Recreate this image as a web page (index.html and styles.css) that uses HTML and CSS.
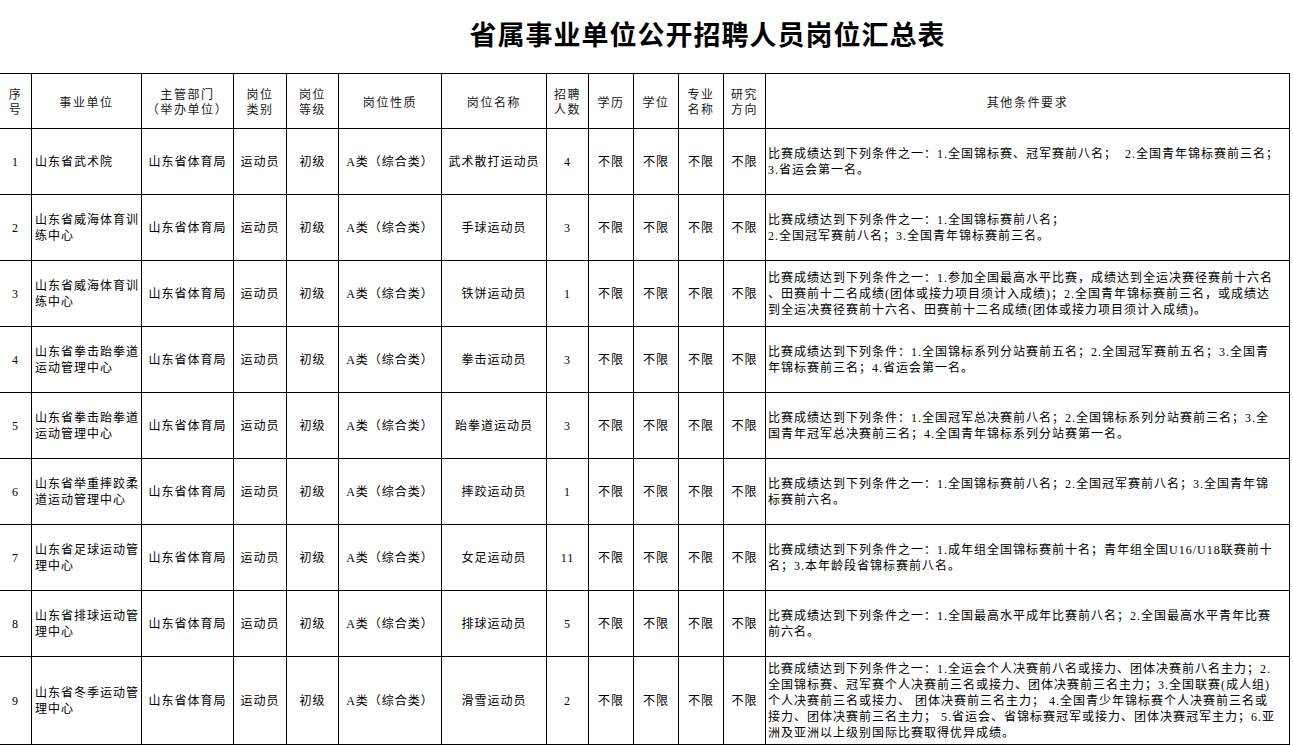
FILE: index.html
```html
<!DOCTYPE html>
<html lang="zh-CN">
<head>
<meta charset="utf-8">
<title>省属事业单位公开招聘人员岗位汇总表</title>
<link rel="stylesheet" href="styles.css">
</head>
<body>
<h1 class="title">省属事业单位公开招聘人员岗位汇总表</h1>
<table class="sheet">
  <colgroup>
    <col class="c-no"><col class="c-unit"><col class="c-dept"><col class="c-type"><col class="c-level">
    <col class="c-nature"><col class="c-name"><col class="c-count"><col class="c-edu"><col class="c-deg">
    <col class="c-major"><col class="c-res"><col class="c-other">
  </colgroup>
  <thead>
    <tr>
      <th>序<br>号</th>
      <th>事业单位</th>
      <th>主管部门<br>（举办单位）</th>
      <th>岗位<br>类别</th>
      <th>岗位<br>等级</th>
      <th>岗位性质</th>
      <th>岗位名称</th>
      <th>招聘<br>人数</th>
      <th>学历</th>
      <th>学位</th>
      <th>专业<br>名称</th>
      <th>研究<br>方向</th>
      <th>其他条件要求</th>
    </tr>
  </thead>
  <tbody>
    <tr>
      <td>1</td><td class="unit">山东省武术院</td><td>山东省体育局</td><td>运动员</td><td>初级</td><td>A类（综合类）</td><td>武术散打运动员</td><td>4</td><td>不限</td><td>不限</td><td>不限</td><td>不限</td>
      <td class="other">比赛成绩达到下列条件之一：1.全国锦标赛、冠军赛前八名；&nbsp; 2.全国青年锦标赛前三名；<br>3.省运会第一名。</td>
    </tr>
    <tr>
      <td>2</td><td class="unit">山东省威海体育训练中心</td><td>山东省体育局</td><td>运动员</td><td>初级</td><td>A类（综合类）</td><td>手球运动员</td><td>3</td><td>不限</td><td>不限</td><td>不限</td><td>不限</td>
      <td class="other">比赛成绩达到下列条件之一：1.全国锦标赛前八名；<br>2.全国冠军赛前八名；3.全国青年锦标赛前三名。</td>
    </tr>
    <tr>
      <td>3</td><td class="unit">山东省威海体育训练中心</td><td>山东省体育局</td><td>运动员</td><td>初级</td><td>A类（综合类）</td><td>铁饼运动员</td><td>1</td><td>不限</td><td>不限</td><td>不限</td><td>不限</td>
      <td class="other">比赛成绩达到下列条件之一：1.参加全国最高水平比赛，成绩达到全运决赛径赛前十六名<br>、田赛前十二名成绩(团体或接力项目须计入成绩)；2.全国青年锦标赛前三名，或成绩达<br>到全运决赛径赛前十六名、田赛前十二名成绩(团体或接力项目须计入成绩)。</td>
    </tr>
    <tr>
      <td>4</td><td class="unit">山东省拳击跆拳道运动管理中心</td><td>山东省体育局</td><td>运动员</td><td>初级</td><td>A类（综合类）</td><td>拳击运动员</td><td>3</td><td>不限</td><td>不限</td><td>不限</td><td>不限</td>
      <td class="other">比赛成绩达到下列条件：1.全国锦标系列分站赛前五名；2.全国冠军赛前五名；3.全国青<br>年锦标赛前三名；4.省运会第一名。</td>
    </tr>
    <tr>
      <td>5</td><td class="unit">山东省拳击跆拳道运动管理中心</td><td>山东省体育局</td><td>运动员</td><td>初级</td><td>A类（综合类）</td><td>跆拳道运动员</td><td>3</td><td>不限</td><td>不限</td><td>不限</td><td>不限</td>
      <td class="other">比赛成绩达到下列条件：1.全国冠军总决赛前八名；2.全国锦标系列分站赛前三名；3.全<br>国青年冠军总决赛前三名；4.全国青年锦标系列分站赛第一名。</td>
    </tr>
    <tr>
      <td>6</td><td class="unit">山东省举重摔跤柔道运动管理中心</td><td>山东省体育局</td><td>运动员</td><td>初级</td><td>A类（综合类）</td><td>摔跤运动员</td><td>1</td><td>不限</td><td>不限</td><td>不限</td><td>不限</td>
      <td class="other">比赛成绩达到下列条件之一：1.全国锦标赛前八名；2.全国冠军赛前八名；3.全国青年锦<br>标赛前六名。</td>
    </tr>
    <tr>
      <td>7</td><td class="unit">山东省足球运动管理中心</td><td>山东省体育局</td><td>运动员</td><td>初级</td><td>A类（综合类）</td><td>女足运动员</td><td>11</td><td>不限</td><td>不限</td><td>不限</td><td>不限</td>
      <td class="other">比赛成绩达到下列条件之一：1.成年组全国锦标赛前十名；青年组全国U16/U18联赛前十<br>名；3.本年龄段省锦标赛前八名。</td>
    </tr>
    <tr>
      <td>8</td><td class="unit">山东省排球运动管理中心</td><td>山东省体育局</td><td>运动员</td><td>初级</td><td>A类（综合类）</td><td>排球运动员</td><td>5</td><td>不限</td><td>不限</td><td>不限</td><td>不限</td>
      <td class="other">比赛成绩达到下列条件之一：1.全国最高水平成年比赛前八名；2.全国最高水平青年比赛<br>前六名。</td>
    </tr>
    <tr class="tall">
      <td>9</td><td class="unit">山东省冬季运动管理中心</td><td>山东省体育局</td><td>运动员</td><td>初级</td><td>A类（综合类）</td><td>滑雪运动员</td><td>2</td><td>不限</td><td>不限</td><td>不限</td><td>不限</td>
      <td class="other">比赛成绩达到下列条件之一：1.全运会个人决赛前八名或接力、团体决赛前八名主力；2.<br>全国锦标赛、冠军赛个人决赛前三名或接力、团体决赛前三名主力；3.全国联赛(成人组)<br>个人决赛前三名或接力、 团体决赛前三名主力； 4.全国青少年锦标赛个人决赛前三名或<br>接力、团体决赛前三名主力； 5.省运会、省锦标赛冠军或接力、团体决赛冠军主力；6.亚<br>洲及亚洲以上级别国际比赛取得优异成绩。</td>
    </tr>
  </tbody>
</table>
</body>
</html>
```

FILE: styles.css
```css
* { box-sizing: border-box; }

html, body {
  margin: 0;
  padding: 0;
  background: #ffffff;
  color: #000000;
}

body {
  width: 1293px;
  height: 745px;
  overflow: hidden;
  font-family: "Liberation Serif", "Noto Sans CJK SC", serif;
}

.title {
  margin: 0;
  height: 73px;
  padding: 0 0 6px 122px;
  display: flex;
  align-items: center;
  justify-content: center;
  font-family: "Noto Sans CJK SC", sans-serif;
  font-weight: 700;
  font-size: 27px;
  letter-spacing: 1px;
  line-height: 1;
}

.sheet {
  table-layout: fixed;
  border-collapse: separate;
  border-spacing: 0;
  width: 1290px;
  border-top: 1px solid #000;
}

.c-no { width: 32px; }
.c-unit { width: 110px; }
.c-dept { width: 92px; }
.c-type { width: 53px; }
.c-level { width: 52px; }
.c-nature { width: 103px; }
.c-name { width: 105px; }
.c-count { width: 42px; }
.c-edu { width: 45px; }
.c-deg { width: 45px; }
.c-major { width: 45px; }
.c-res { width: 42px; }
.c-other { width: 524px; }

.sheet th,
.sheet td {
  border-right: 1px solid #000;
  border-bottom: 1px solid #000;
  padding: 0;
  text-align: center;
  vertical-align: middle;
  font-size: 12px;
  letter-spacing: 1px;
  line-height: 16px;
  overflow: hidden;
}

.sheet th {
  height: 55px;
  font-family: "Noto Sans CJK SC", sans-serif;
  font-weight: 400;
  color: #1a1a1a;
  letter-spacing: 1.6px;
  line-height: 15px;
}

.sheet td {
  height: 66px;
}

.sheet tr.tall td {
  height: 88px;
}

.sheet td.unit {
  text-align: left;
  padding-left: 3px;
  padding-right: 0;
}

.sheet td.other {
  text-align: left;
  padding-left: 2px;
  padding-right: 0;
}
```
